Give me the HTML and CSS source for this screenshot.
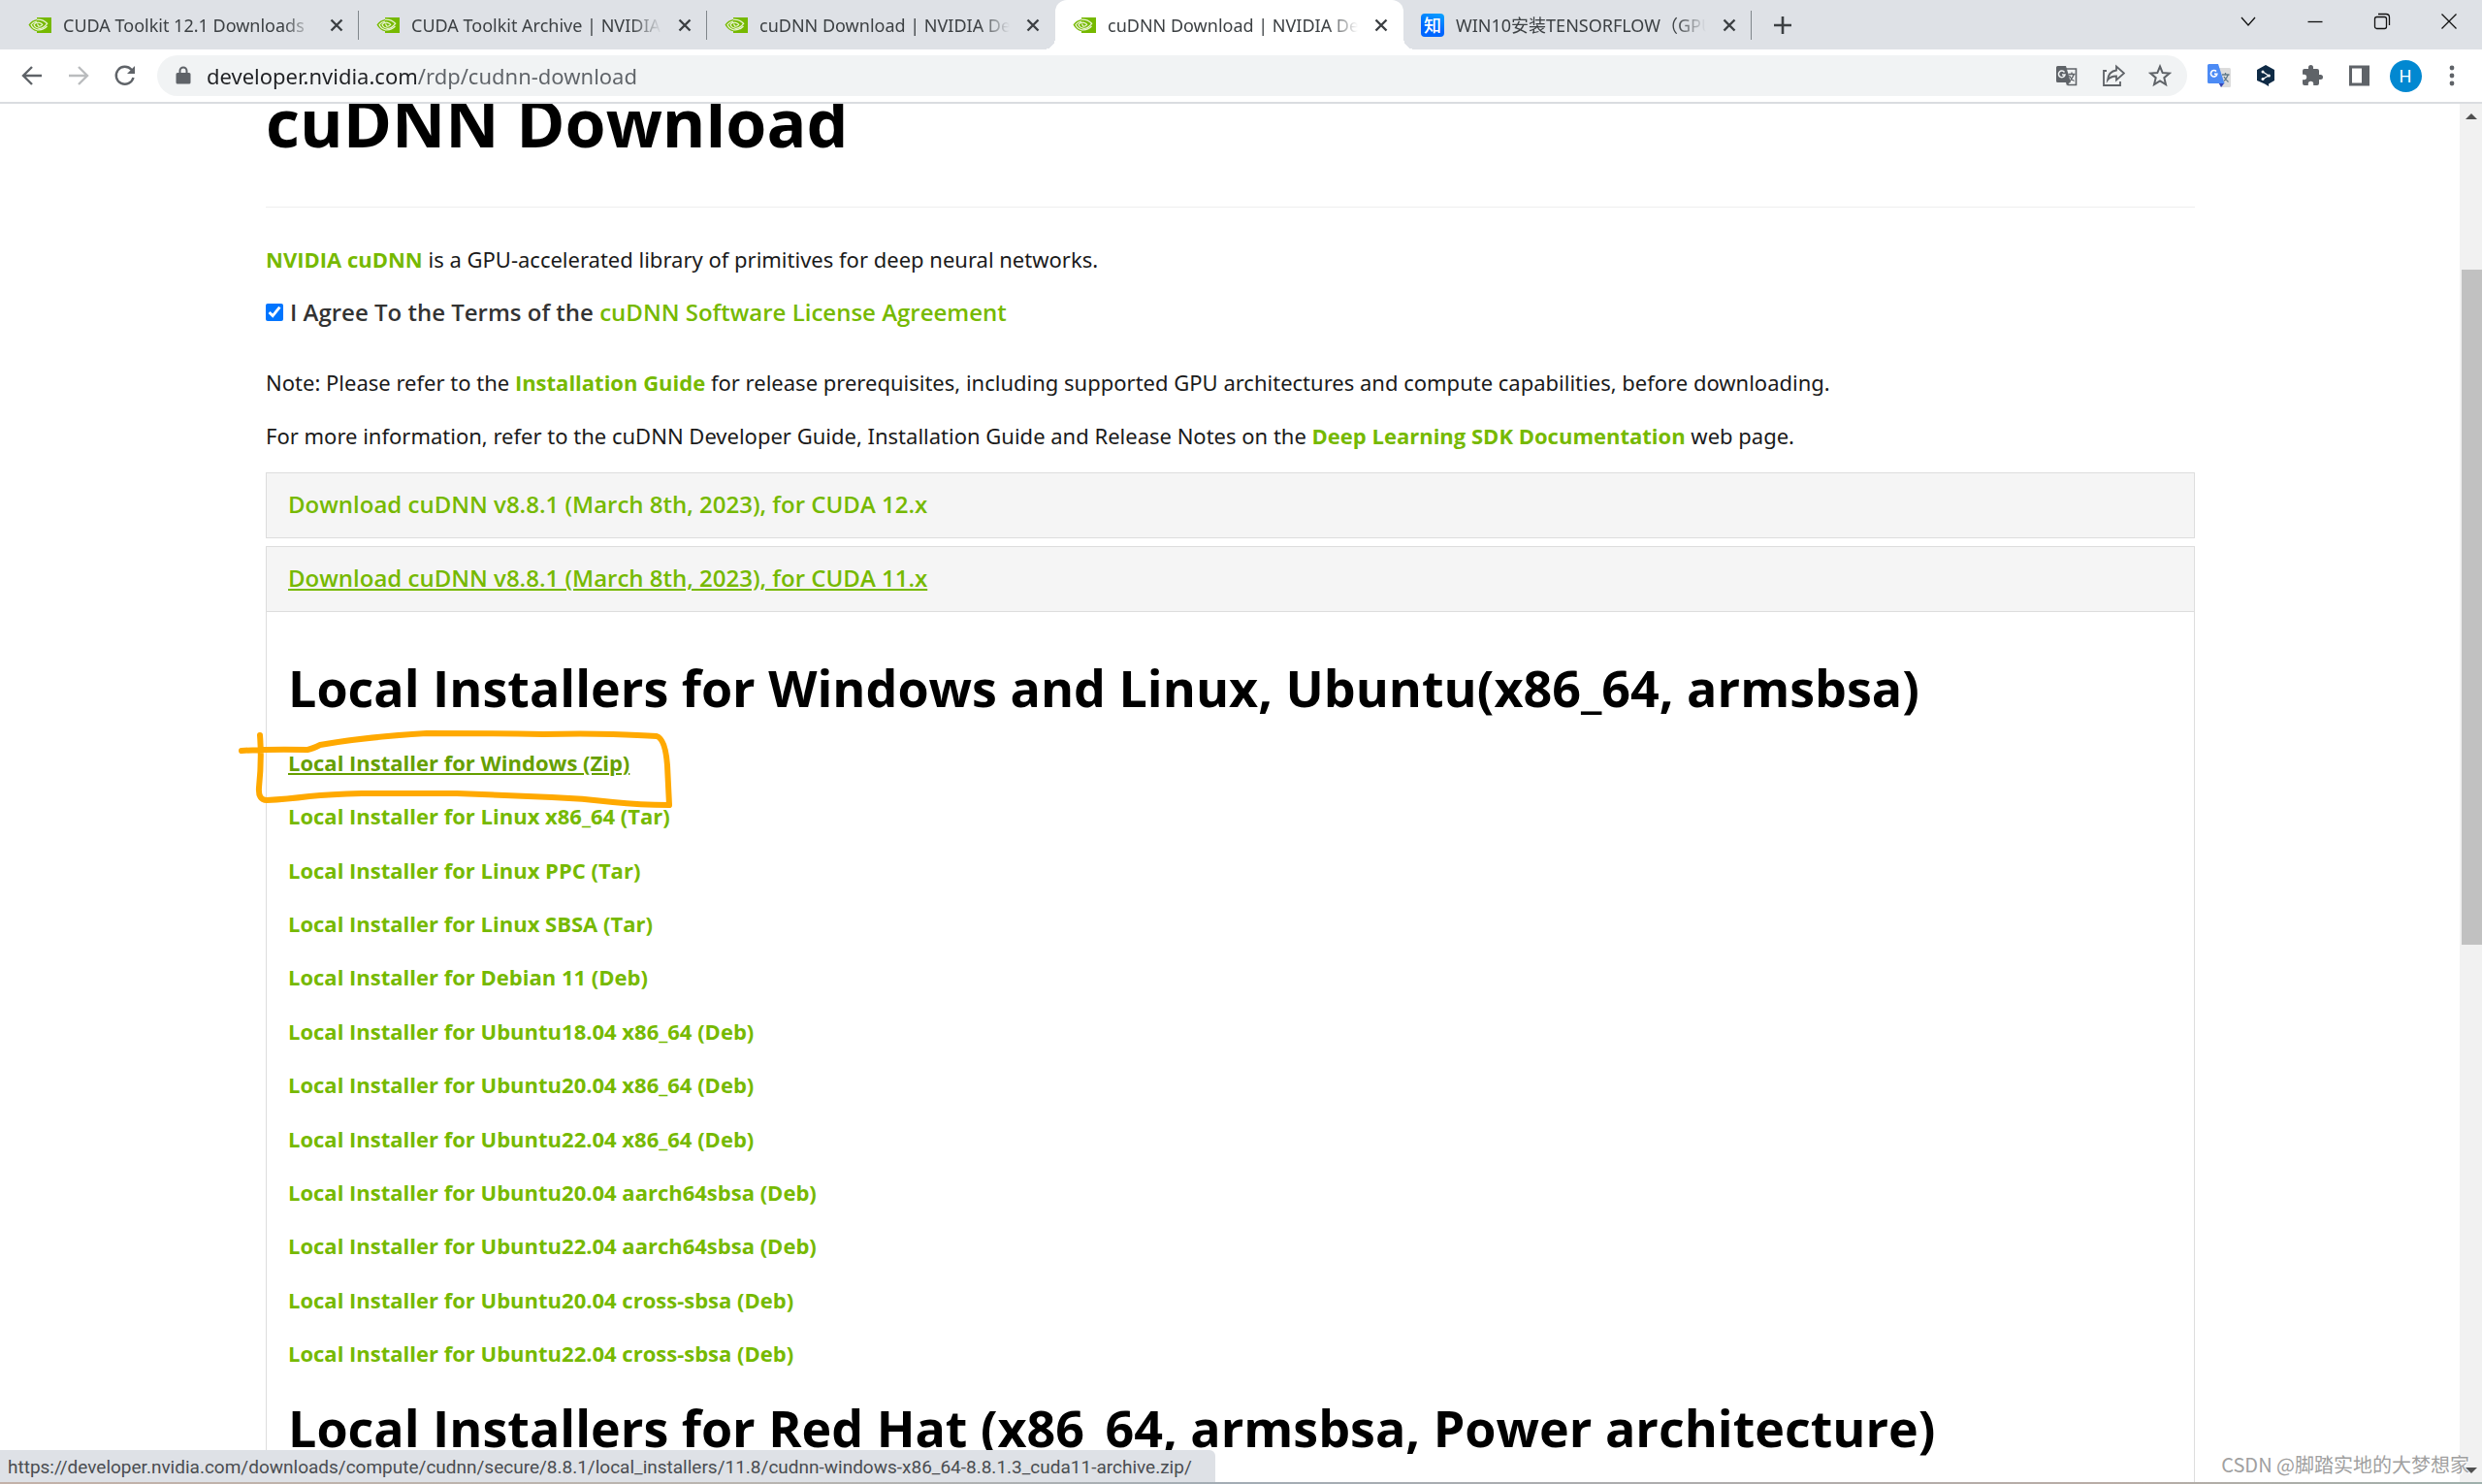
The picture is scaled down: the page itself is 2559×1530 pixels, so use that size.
FILE: index.html
```html
<!DOCTYPE html>
<html lang="en">
<head>
<meta charset="utf-8">
<meta name="viewport" content="width=device-width, initial-scale=1">
<title>cuDNN Download | NVIDIA Developer</title>
<link rel="stylesheet" href="styles.css">
</head>
<body>
<svg class="sprite" aria-hidden="true">
  <symbol id="nv" viewBox="0 0 24 16">
    <path fill="#76b900" d="M9 0H24V16H9V14.300Q3.500 13 .500 7.400Q3.600 3 9 2Z"/>
    <g fill="none" stroke="#e9f3d4" stroke-width="1.300">
      <path d="M9 3.800Q5 4.600 3 7.500Q5 11.700 9.500 12.800Q15 13.600 19.500 9"/>
      <path d="M9 2.200Q15.500 1.800 19.600 6.300Q15.500 11.600 11.500 11.300Q7.200 10.800 6 7.400Q8.500 4.600 11.500 5.300Q14 6 14.700 7.300Q12.700 9.700 10.500 8.800L9.500 6.500"/>
    </g>
  </symbol>
  <symbol id="x" viewBox="0 0 24 24"><path d="M6.500 6.500l11 11M17.500 6.500l-11 11" fill="none" stroke="currentColor" stroke-width="2.400"/></symbol>
</svg>

<header class="tabstrip">
  <nav class="tabs" aria-label="Tabs">
    <div class="tab"><svg class="fav"><use href="#nv"/></svg><span class="tab-title">CUDA Toolkit 12.1 Downloads</span><button class="tab-close" aria-label="Close tab"><svg><use href="#x"/></svg></button></div>
    <div class="tab"><svg class="fav"><use href="#nv"/></svg><span class="tab-title">CUDA Toolkit Archive | NVIDIA</span><button class="tab-close" aria-label="Close tab"><svg><use href="#x"/></svg></button></div>
    <div class="tab before-active"><svg class="fav"><use href="#nv"/></svg><span class="tab-title">cuDNN Download | NVIDIA De</span><button class="tab-close" aria-label="Close tab"><svg><use href="#x"/></svg></button></div>
    <div class="tab active"><svg class="fav"><use href="#nv"/></svg><span class="tab-title">cuDNN Download | NVIDIA De</span><button class="tab-close" aria-label="Close tab"><svg><use href="#x"/></svg></button></div>
    <div class="tab"><span class="zhi">知</span><span class="tab-title">WIN10安装TENSORFLOW（GPU</span><button class="tab-close" aria-label="Close tab"><svg><use href="#x"/></svg></button></div>
  </nav>
  <button class="new-tab" aria-label="New tab"><svg viewBox="0 0 20 20"><path d="M10 1v18M1 10h18" stroke="#3c4043" stroke-width="2.600"/></svg></button>
  <div class="window-buttons">
    <button aria-label="Search tabs"><svg viewBox="0 0 18 18"><path d="M2 5l7 8 7-8"/></svg></button>
    <button aria-label="Minimize"><svg viewBox="0 0 18 18"><path d="M1.500 9.500h15"/></svg></button>
    <button aria-label="Restore"><svg viewBox="0 0 18 18"><rect x="1.500" y="4.500" width="12" height="12" rx="2"/><path d="M5 1.500h8q3.500 0 3.500 3.500v8"/></svg></button>
    <button aria-label="Close window"><svg viewBox="0 0 18 18"><path d="M1.500 1.500l15 15M16.500 1.500l-15 15"/></svg></button>
  </div>
</header>

<div class="toolbar">
  <button aria-label="Back"><svg viewBox="0 0 24 24" class="line"><path d="M22 12H3M12 3l-9 9 9 9"/></svg></button>
  <button aria-label="Forward" class="off"><svg viewBox="0 0 24 24" class="line"><path d="M2 12h19M12 3l9 9-9 9"/></svg></button>
  <button aria-label="Reload"><svg viewBox="0 0 24 24" class="line"><path d="M20.500 14a9 9 0 1 1-2-8.200L21 8.500"/><path d="M22 2v8h-8z" fill="currentColor" stroke="none"/></svg></button>
  <form class="omnibox">
    <svg class="lock" viewBox="0 0 16 20"><path fill="#5f6368" d="M2 7h12a1.500 1.500 0 0 1 1.500 1.500v8.500a1.500 1.500 0 0 1-1.500 1.500H2a1.500 1.500 0 0 1-1.500-1.500V8.500A1.500 1.500 0 0 1 2 7z"/><path d="M4.500 8V5a3.500 3.500 0 0 1 7 0v3" fill="none" stroke="#5f6368" stroke-width="2"/></svg>
    <input type="text" class="url" aria-label="Address and search bar" value="developer.nvidia.com/rdp/cudnn-download">
    <button type="button" aria-label="Translate this page"><svg viewBox="0 0 24 24"><path d="M10 5h11.500v16.500H13" fill="none" stroke="#5f6368" stroke-width="1.600"/><path fill="#5f6368" d="M2.500 2H11l5 17H2.500A1.500 1.500 0 0 1 1 17.500v-14A1.500 1.500 0 0 1 2.500 2zM11 19h4l-3 3.500z"/><path d="M9.500 8.500A3.300 3.300 0 1 0 10 11H7" fill="none" stroke="#f1f3f4" stroke-width="1.500"/><path d="M13.500 10.500h7M17 8.500v2M19 11q-1 4-4.500 6.500M14.500 12q2 4 5 5.500" fill="none" stroke="#5f6368" stroke-width="1.300"/></svg></button>
    <button type="button" aria-label="Share"><svg viewBox="0 0 24 24" fill="none" stroke="#5f6368" stroke-width="1.800"><path d="M5 7H2v15h17v-4"/><path d="M15 2.500l8 7-8 7v-4q-6 0-9 4 1-9 9-10z"/></svg></button>
    <button type="button" aria-label="Bookmark this tab"><svg viewBox="0 0 24 24" fill="none" stroke="#5f6368" stroke-width="2"><path d="M12 2.500l2.700 6.600 7 .5-5.400 4.600 1.700 6.900-6-3.700-6 3.700 1.700-6.900-5.400-4.600 7-.5z"/></svg></button>
  </form>
  <button aria-label="Google Translate"><svg viewBox="0 0 24 24"><path fill="#dcdcdc" d="M9 4h13.500a1.500 1.500 0 0 1 1.500 1.500v17a1.500 1.500 0 0 1-1.500 1.500H14z"/><path fill="#3646b5" d="M11.500 19.500h6L14 24z"/><path fill="#4c8bf5" d="M1.500 0H11l6.500 20h-16A1.500 1.500 0 0 1 0 18.500v-17A1.500 1.500 0 0 1 1.500 0z"/><path d="M9 7.600A3.200 3.200 0 1 0 9.800 10.300H7" fill="none" stroke="#fff" stroke-width="1.600"/><path d="M15 11h7.500M18.500 9v2M21 11.500q-1.500 4-4 6M17 13q2 3.500 4.500 5.500" fill="none" stroke="#607988" stroke-width="1.300"/></svg></button>
  <button aria-label="DeepL"><svg viewBox="0 0 24 24"><path fill="#0f2b46" d="M12 1l9 5v11l-6 3.500V23l-4-2.500L3 17V6z"/><path d="M9 8l6 4-6 3.500" fill="none" stroke="#fff" stroke-width="1.200"/><g fill="#fff"><circle cx="9" cy="8" r="1.500"/><circle cx="15.300" cy="12" r="1.600"/><circle cx="9" cy="15.500" r="1.500"/></g></svg></button>
  <button aria-label="Extensions"><svg viewBox="0 0 24 24"><path fill="#5f6368" d="M20.500 11H19V7a2 2 0 0 0-2-2h-4V3.500a2.500 2.500 0 0 0-5 0V5H4a2 2 0 0 0-2 2v3.800h1.500a2.700 2.700 0 0 1 0 5.400H2V20a2 2 0 0 0 2 2h3.800v-1.500a2.700 2.700 0 0 1 5.400 0V22H17a2 2 0 0 0 2-2v-4h1.500a2.500 2.500 0 0 0 0-5z"/></svg></button>
  <button aria-label="Side panel"><svg viewBox="0 0 24 24"><path fill="#5f6368" fill-rule="evenodd" d="M2 1.500h21v21H2zM5 4.500v15h10v-15z"/></svg></button>
  <button aria-label="Profile" class="avatar"><span>H</span></button>
  <button aria-label="Menu"><svg viewBox="0 0 24 24" fill="#5f6368"><circle cx="12" cy="4" r="2.400"/><circle cx="12" cy="12" r="2.400"/><circle cx="12" cy="20" r="2.400"/></svg></button>
</div>

<div class="viewport">
  <main class="page">
    <h1>cuDNN Download</h1>
    <p><a href="#cudnn">NVIDIA cuDNN</a> is a GPU-accelerated library of primitives for deep neural networks.</p>
    <div class="agree">
      <input type="checkbox" id="agree" checked>
      <label for="agree">I Agree To the Terms of the <a href="#license">cuDNN Software License Agreement</a></label>
    </div>
    <p>Note: Please refer to the <a href="#guide">Installation Guide</a> for release prerequisites, including supported GPU architectures and compute capabilities, before downloading.</p>
    <p>For more information, refer to the cuDNN Developer Guide, Installation Guide and Release Notes on the <a href="#docs">Deep Learning SDK Documentation</a> web page.</p>

    <section class="release">
      <h3><a href="#cuda12">Download cuDNN v8.8.1 (March 8th, 2023), for CUDA 12.x</a></h3>
    </section>
    <section class="release open">
      <h3><a href="#cuda11">Download cuDNN v8.8.1 (March 8th, 2023), for CUDA 11.x</a></h3>
      <div class="release-body">
        <h2>Local Installers for Windows and Linux, Ubuntu(x86_64, armsbsa)</h2>
        <ul class="installers">
          <li class="marked"><a href="#zip" class="hover">Local Installer for Windows (Zip)</a>
            <svg class="scribble" viewBox="240 750 460 90" aria-hidden="true"><path d="M249 775Q280 773 317 774Q322 773 330 769Q375 761 440 757Q500 757 560 758Q600 757 632 758Q660 759 677 760Q686 763 688 790L690 831Q660 831 632 828Q600 824 569 823Q520 821 471 819H373Q340 820 319 822Q295 825 275 826Q266 826 267 813Q270 785 268 759"/></svg>
          </li>
          <li><a href="#i1">Local Installer for Linux x86_64 (Tar)</a></li>
          <li><a href="#i2">Local Installer for Linux PPC (Tar)</a></li>
          <li><a href="#i3">Local Installer for Linux SBSA (Tar)</a></li>
          <li><a href="#i4">Local Installer for Debian 11 (Deb)</a></li>
          <li><a href="#i5">Local Installer for Ubuntu18.04 x86_64 (Deb)</a></li>
          <li><a href="#i6">Local Installer for Ubuntu20.04 x86_64 (Deb)</a></li>
          <li><a href="#i7">Local Installer for Ubuntu22.04 x86_64 (Deb)</a></li>
          <li><a href="#i8">Local Installer for Ubuntu20.04 aarch64sbsa (Deb)</a></li>
          <li><a href="#i9">Local Installer for Ubuntu22.04 aarch64sbsa (Deb)</a></li>
          <li><a href="#i10">Local Installer for Ubuntu20.04 cross-sbsa (Deb)</a></li>
          <li><a href="#i11">Local Installer for Ubuntu22.04 cross-sbsa (Deb)</a></li>
        </ul>
        <h2>Local Installers for Red Hat (x86_64, armsbsa, Power architecture)</h2>
      </div>
    </section>
  </main>
  <div class="scrollbar" aria-hidden="true">
    <span class="arrow up"></span>
    <div class="track"><div class="thumb"></div></div>
    <span class="arrow down"></span>
  </div>
  <div class="status">https://developer.nvidia.com/downloads/compute/cudnn/secure/8.8.1/local_installers/11.8/cudnn-windows-x86_64-8.8.1.3_cuda11-archive.zip/</div>
  <div class="watermark">CSDN @脚踏实地的大梦想家</div>
</div>
<div class="desktop-edge"></div>
</body>
</html>
```
FILE: styles.css
```css
:root {
  --green: #76b900;
  --grey: #5f6368;
  --ui: "Noto Sans", "Noto Sans CJK SC", sans-serif;
  --bold: "Open Sans", "Noto Sans", sans-serif;
}
* { box-sizing: border-box; }
body {
  margin: 0;
  height: 100vh;
  display: flex;
  flex-direction: column;
  overflow: hidden;
  background: #fff;
  color: #1a1a1a;
  font-family: var(--ui);
}
button { border: 0; padding: 0; background: none; color: inherit; font: inherit; }
svg { display: block; }
.sprite { position: absolute; width: 0; height: 0; }

/* tab strip */
.tabstrip { display: flex; flex: none; height: 51px; padding-left: 11px; background: #dee1e6; color: #3c4043; }
.tabs { display: flex; }
.tab {
  position: relative;
  display: flex;
  align-items: center;
  gap: 12px;
  width: 359px;
  padding: 0 11px 0 18px;
  font-size: 18px;
  line-height: 26px;
}
.tab::after { content: ""; position: absolute; right: 0; top: 11px; width: 1px; height: 30px; background: #80868b; }
.before-active::after { display: none; }
.tab.active { background: #fff; border-radius: 12px 12px 0 0; }
.tab.active::before, .tab.active::after {
  content: "";
  position: absolute;
  top: auto;
  bottom: 0;
  width: 12px;
  height: 12px;
}
.tab.active::before { left: -12px; background: radial-gradient(circle at 0 0, #dee1e6 12px, #fff 12px); }
.tab.active::after { right: -12px; background: radial-gradient(circle at 100% 0, #dee1e6 12px, #fff 12px); }
.fav { flex: none; width: 24px; height: 16px; }
.zhi {
  flex: none;
  width: 24px;
  height: 24px;
  border-radius: 4px;
  background: linear-gradient(200deg, #0aa5ff, #0066ff 60%);
  color: #fff;
  font: 500 18px/22px "Noto Sans CJK SC", sans-serif;
  text-align: center;
}
.tab-title {
  flex: 1;
  min-width: 0;
  overflow: hidden;
  white-space: nowrap;
  -webkit-mask-image: linear-gradient(90deg, #000 88%, transparent);
  mask-image: linear-gradient(90deg, #000 88%, transparent);
}
.tab-close, .tab-close svg { width: 24px; height: 24px; }
.new-tab { width: 64px; display: grid; place-items: center; }
.new-tab svg { width: 20px; height: 20px; }
.window-buttons { display: flex; margin-left: auto; height: 44px; color: #111; }
.window-buttons button { width: 69px; display: grid; place-items: center; }
.window-buttons svg { width: 18px; height: 18px; fill: none; stroke: currentColor; stroke-width: 1.3; }

/* toolbar */
.toolbar {
  display: flex;
  flex: none;
  align-items: center;
  height: 56px;
  padding: 0 7px 0 9px;
  border-bottom: 2px solid #dadce0;
  color: var(--grey);
}
.toolbar button { flex: none; width: 48px; height: 42px; display: grid; place-items: center; }
.toolbar svg { width: 24px; height: 24px; }
.toolbar .line { fill: none; stroke: currentColor; stroke-width: 2.4; }
.toolbar .off { color: #babcbe; }
.omnibox {
  display: flex;
  flex: 1;
  align-items: center;
  height: 42px;
  margin: 0 9px;
  padding: 0 4px 0 19px;
  border-radius: 21px;
  background: #f1f3f4;
}
.toolbar .lock { width: 16px; height: 20px; }
.url {
  flex: 1;
  min-width: 0;
  height: 42px;
  margin-left: 16px;
  padding: 0;
  border: 0;
  outline: 0;
  color: #202124;
  font: 22px/32px var(--ui);
  background: linear-gradient(90deg, #202124 218px, #5f6368 218px);
  -webkit-background-clip: text;
  background-clip: text;
  -webkit-text-fill-color: transparent;
}
.avatar span {
  width: 33px;
  height: 33px;
  border-radius: 50%;
  background: #0288d1;
  color: #fff;
  font: 18px/33px Roboto, sans-serif;
  text-align: center;
}

/* page */
.viewport { position: relative; display: flex; flex: 1; min-height: 0; overflow: hidden; }
.page { flex: 1; min-width: 0; padding: 0 273px 0 274px; font-size: 22px; line-height: 34px; }
.page h1 {
  margin: -21px 0 36px;
  padding-bottom: 47px;
  border-bottom: 1px solid #eee;
  color: #000;
  font: 700 68px/80px var(--bold);
}
.page p { margin: 0 0 21px; }
.page a { color: var(--green); font-family: var(--bold); font-weight: 700; text-decoration: none; }
.agree {
  display: flex;
  align-items: center;
  gap: 7px;
  margin-bottom: 38px;
  color: #333;
  font: 600 24px/34px var(--bold);
}
.agree input { width: 18px; height: 18px; margin: 0; accent-color: #0075ff; }
.page .agree a, .page h3 a { font-weight: 600; }
.release { margin-bottom: 8px; border: 1px solid #ddd; }
.release h3 { margin: 0; padding: 15px 22px 17px; background: #f5f5f5; font: 600 24px/34px var(--bold); }
.release.open h3 { border-bottom: 1px solid #ddd; }
.open h3 a, .page .hover { text-decoration: underline; text-decoration-thickness: 2px; text-underline-offset: 2px; }
.release-body { padding: 46px 22px; }
.page h2 { margin: 0 0 28px; color: #000; font: 700 52px/64px var(--bold); }
.installers {
  display: flex;
  flex-direction: column;
  justify-content: space-between;
  min-height: 643px;
  margin: 0 0 28px;
  padding: 0;
  list-style: none;
}
.marked { position: relative; }
.page .hover { color: #669f00; }
.scribble {
  position: absolute;
  left: -57px;
  top: -20px;
  width: 460px;
  height: 90px;
  fill: none;
  stroke: #ffa900;
  stroke-width: 6;
  stroke-linecap: round;
  stroke-linejoin: round;
  pointer-events: none;
}

/* scroll bar */
.scrollbar { display: flex; flex-direction: column; flex: none; align-items: center; width: 23px; padding: 10px 0 9px; background: #f1f1f1; }
.track { flex: 1; align-self: stretch; padding: 155px 0 0 2px; }
.thumb { height: calc(56% + 4px); background: #c1c1c1; }
.arrow { width: 0; height: 0; border: 6px solid transparent; }
.up { border-top: 0; border-bottom-color: #505050; }
.down { position: relative; z-index: 2; border-bottom: 0; border-top-color: #505050; }

/* overlays */
.status {
  position: absolute;
  left: 0;
  bottom: 0;
  padding: 5px 24px 2px 8px;
  border-top-right-radius: 6px;
  background: #dee1e6;
  color: #4a4d51;
  font: 19px/26px Roboto, sans-serif;
}
.watermark {
  position: absolute;
  right: 13px;
  bottom: 5px;
  color: #a0a0a0;
  font: 20px/26px "Noto Sans CJK SC", sans-serif;
  text-shadow: 1px 1px 0 #fff;
}
.desktop-edge { flex: none; height: 2px; background: linear-gradient(90deg, #c3b1a8, #b9b5b0 30%, #a3adb5 50%, #b9ada6 85%, #9fb0ac); }
```
